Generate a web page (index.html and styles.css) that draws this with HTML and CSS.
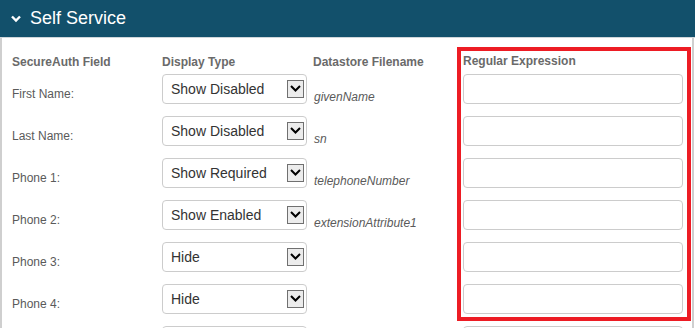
FILE: index.html
```html
<!DOCTYPE html>
<html>
<head>
<meta charset="utf-8">
<link rel="stylesheet" href="styles.css">
</head>
<body>
<div class="page">
  <div class="header">
    <svg class="chev" width="10" height="8" viewBox="0 0 10 8"><path d="M1 1.5 L5 5.5 L9 1.5" fill="none" stroke="#fff" stroke-width="2.4"/></svg>
    <span class="title">Self Service</span>
  </div>
  <div class="panel">
    <div class="grid">
      <div class="th">SecureAuth Field</div>
      <div class="th">Display Type</div>
      <div class="th">Datastore Filename</div>
      <div class="th">Regular Expression</div>

      <div class="lbl">First Name:</div>
      <div class="cell"><div class="sel"><span>Show Disabled</span><span class="arr"><svg width="11" height="7" viewBox="0 0 11 7"><path d="M1 1 L5.5 5.5 L10 1" fill="none" stroke="#000" stroke-width="2"/></svg></span></div></div>
      <div class="ds">givenName</div>
      <div class="cell"><div class="inp"></div></div>

      <div class="lbl">Last Name:</div>
      <div class="cell"><div class="sel"><span>Show Disabled</span><span class="arr"><svg width="11" height="7" viewBox="0 0 11 7"><path d="M1 1 L5.5 5.5 L10 1" fill="none" stroke="#000" stroke-width="2"/></svg></span></div></div>
      <div class="ds">sn</div>
      <div class="cell"><div class="inp"></div></div>

      <div class="lbl">Phone 1:</div>
      <div class="cell"><div class="sel"><span>Show Required</span><span class="arr"><svg width="11" height="7" viewBox="0 0 11 7"><path d="M1 1 L5.5 5.5 L10 1" fill="none" stroke="#000" stroke-width="2"/></svg></span></div></div>
      <div class="ds">telephoneNumber</div>
      <div class="cell"><div class="inp"></div></div>

      <div class="lbl">Phone 2:</div>
      <div class="cell"><div class="sel"><span>Show Enabled</span><span class="arr"><svg width="11" height="7" viewBox="0 0 11 7"><path d="M1 1 L5.5 5.5 L10 1" fill="none" stroke="#000" stroke-width="2"/></svg></span></div></div>
      <div class="ds">extensionAttribute1</div>
      <div class="cell"><div class="inp"></div></div>

      <div class="lbl">Phone 3:</div>
      <div class="cell"><div class="sel"><span>Hide</span><span class="arr"><svg width="11" height="7" viewBox="0 0 11 7"><path d="M1 1 L5.5 5.5 L10 1" fill="none" stroke="#000" stroke-width="2"/></svg></span></div></div>
      <div class="ds"></div>
      <div class="cell"><div class="inp"></div></div>

      <div class="lbl">Phone 4:</div>
      <div class="cell"><div class="sel"><span>Hide</span><span class="arr"><svg width="11" height="7" viewBox="0 0 11 7"><path d="M1 1 L5.5 5.5 L10 1" fill="none" stroke="#000" stroke-width="2"/></svg></span></div></div>
      <div class="ds"></div>
      <div class="cell"><div class="inp"></div></div>

      <div class="lbl"></div>
      <div class="cell"><div class="sel"></div></div>
      <div class="ds"></div>
      <div class="cell"><div class="inp"></div></div>
    </div>
    <div class="highlight"></div>
  </div>
</div>
</body>
</html>
```
FILE: styles.css
```css
html, body {
  margin: 0;
  padding: 0;
  background: #fff;
  overflow: hidden;
}
body {
  font-family: "Liberation Sans", Arial, sans-serif;
  width: 695px;
  height: 328px;
}
.page {
  width: 695px;
  height: 328px;
  overflow: hidden;
}
.header {
  height: 38px;
  background: #12506b;
  display: flex;
  align-items: center;
  padding-left: 11px;
  box-sizing: border-box;
  border-bottom: 1px solid #cfd6da;
}
.chev {
  margin-right: 9px;
  margin-top: 1px;
}
.title {
  color: #fff;
  font-size: 18px;
}
.panel {
  position: relative;
  border-left: 2px solid #cfcfcf;
  border-right: 2px solid #cfcfcf;
  margin-right: 1px;
  height: 300px;
  box-sizing: border-box;
}
.grid {
  display: grid;
  grid-template-columns: 150px 151px 150px 220px;
  grid-template-rows: 36px;
  grid-auto-rows: 42px;
  padding-left: 10px;
}
.th {
  font-size: 12px;
  font-weight: bold;
  color: #6a6a6a;
  height: 36px;
  padding-top: 17px;
  box-sizing: border-box;
  line-height: 14px;
}
.grid > .th:nth-child(4) {
  padding-top: 16px;
}
.lbl {
  font-size: 12px;
  color: #5a5a5a;
  padding-top: 13px;
  line-height: 14px;
}
.ds {
  font-size: 12px;
  font-style: italic;
  color: #5a5a5a;
  padding-top: 16px;
  line-height: 14px;
  padding-left: 1px;
}
.sel {
  width: 145px;
  height: 30px;
  box-sizing: border-box;
  border: 1px solid #cccccc;
  border-radius: 4px;
  display: flex;
  align-items: center;
  justify-content: space-between;
  padding-left: 8px;
  padding-right: 2px;
  font-size: 14px;
  color: #333;
  padding-bottom: 1px;
}
.arr {
  width: 17px;
  height: 18px;
  box-sizing: border-box;
  border: 1px solid #707070;
  background: #ececec;
  display: flex;
  align-items: center;
  justify-content: center;
}
.inp {
  width: 220px;
  height: 30px;
  box-sizing: border-box;
  border: 1px solid #cccccc;
  border-radius: 4px;
}
.grid > div:nth-child(n+5) {
  height: 42px;
  box-sizing: border-box;
}
.highlight {
  position: absolute;
  left: 455px;
  top: 9px;
  width: 234px;
  height: 274px;
  box-sizing: border-box;
  border: 4px solid #ed1c24;
}
```
